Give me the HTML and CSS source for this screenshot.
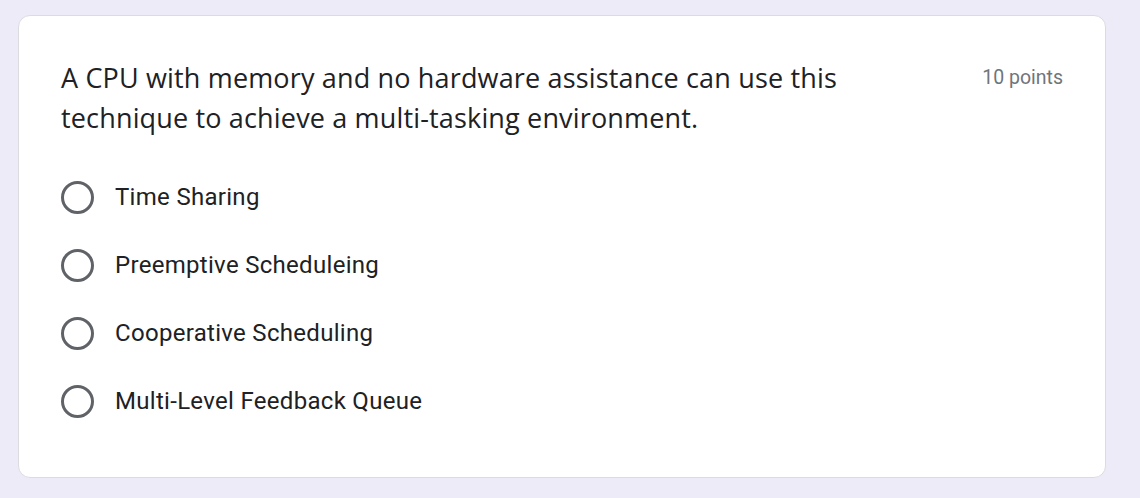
FILE: index.html
```html
<!DOCTYPE html>
<html>
<head>
<meta charset="utf-8">
<link rel="stylesheet" href="styles.css">
</head>
<body>
<div class="page">
  <div class="card">
    <div class="header">
      <div class="question">A CPU with memory and no hardware assistance can use this technique to achieve a multi-tasking environment.</div>
      <div class="points">10 points</div>
    </div>
    <div class="options">
      <label class="option"><span class="radio"></span><span class="label">Time Sharing</span></label>
      <label class="option"><span class="radio"></span><span class="label">Preemptive Scheduleing</span></label>
      <label class="option"><span class="radio"></span><span class="label">Cooperative Scheduling</span></label>
      <label class="option"><span class="radio"></span><span class="label">Multi-Level Feedback Queue</span></label>
    </div>
  </div>
</div>
</body>
</html>
```
FILE: styles.css
```css
html, body {
  margin: 0;
  padding: 0;
  background: #eeebf8;
  height: 100%;
}
.page {
  padding: 15px 34px 20px 18px;
}
.card {
  background: #ffffff;
  border: 1px solid #dadce0;
  border-radius: 12px;
  box-sizing: border-box;
  height: 463px;
  padding: 42px 42px 0 42px;
}
.header {
  display: flex;
  justify-content: space-between;
  align-items: flex-start;
}
.question {
  font-family: "Open Sans", sans-serif;
  font-size: 27px;
  letter-spacing: 0.16px;
  line-height: 40px;
  color: #202124;
  width: 860px;
}
.points {
  font-family: Roboto, sans-serif;
  font-size: 19.5px;
  color: #70757a;
  line-height: 40px;
}
.options {
  display: flex;
  flex-direction: column;
  margin-top: 25px;
}
.option {
  display: flex;
  align-items: center;
  height: 68px;
  gap: 21px;
}
.radio {
  width: 33px;
  height: 33px;
  box-sizing: border-box;
  border: 3px solid #5f6368;
  border-radius: 50%;
}
.label {
  font-family: Roboto, sans-serif;
  font-size: 24px;
  letter-spacing: 0.3px;
  color: #202124;
}
```
